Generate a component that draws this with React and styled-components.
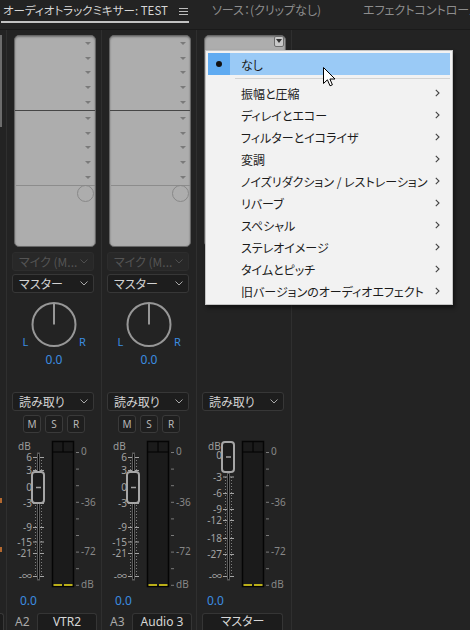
import React from 'react';
import styled, { createGlobalStyle } from 'styled-components';

const JP = `"Noto Sans CJK JP", "Noto Sans", sans-serif`;
const UI = `"Noto Sans", "Noto Sans CJK JP", sans-serif`;
const BLUE = '#3b8de0';

const GlobalStyle = createGlobalStyle`
  html, body { margin: 0; padding: 0; background: #232323; }
  body { font-family: ${UI}; }
  * { box-sizing: border-box; }
`;

const Frame = styled.div`
  position: relative;
  width: 470px;
  height: 630px;
  overflow: hidden;
  background: #232323;
  display: flex;
  flex-direction: column;
`;

/* ---------- tabs ---------- */
const TabBar = styled.div`
  height: 30px;
  flex: none;
  display: flex;
  align-items: flex-start;
  border-bottom: 1px solid #1a1a1a;
`;
const Tab = styled.div`
  height: 23px;
  flex: none;
  display: flex;
  align-items: center;
  margin-left: ${p => p.$ml}px;
  padding-left: ${p => p.$pl || 0}px;
  width: ${p => (p.$w ? `${p.$w}px` : 'auto')};
  font-family: ${JP};
  font-size: ${p => p.$fs || 12}px;
  font-feature-settings: "palt";
  white-space: nowrap;
  padding-bottom: 2px;
  color: ${p => (p.$active ? '#d6d6d6' : '#8d8d8d')};
  border-bottom: 2px solid ${p => (p.$active ? '#c2c2c2' : 'transparent')};
`;
const TabMenuIcon = styled.svg`
  margin-left: auto;
  margin-right: 1px;
  margin-top: 4px;
  flex: none;
`;

/* ---------- panel ---------- */
const Panel = styled.div`
  flex: 1;
  display: flex;
  min-height: 0;
`;
const Divider = styled.div`
  width: 1px;
  flex: none;
  background: #2f2f2f;
`;
const Edge = styled.div`
  width: 6px;
  flex: none;
  display: flex;
  flex-direction: column;
  align-items: flex-start;
`;
const EdgeFx = styled.div`
  margin-top: 5px;
  width: 2px;
  height: 92px;
  background: #6c6c6c;
`;
const EdgeMark = styled.div`
  width: 2px;
  height: 5px;
  margin-top: ${p => p.$mt}px;
  background: #b3682f;
`;
const EdgeName = styled.div`
  margin-top: auto;
  width: 4px;
  height: 17px;
  background: #1c1c1c;
  border: 1px solid #383838;
  border-left: none;
  border-bottom: none;
  border-radius: 0 3px 0 0;
`;
const Column = styled.div`
  width: 94px;
  flex: none;
  display: flex;
  flex-direction: column;
  padding-top: 5px;
  overflow: hidden;
  & > * { flex: none; }
`;

/* ---------- fx box ---------- */
const FxBox = styled.div`
  margin-left: 7px;
  width: 82px;
  height: 212px;
  background: #adadad;
  border: 1px solid #666;
  border-radius: 5px;
  box-shadow: inset 0 1px 2px rgba(0, 0, 0, 0.35);
  display: flex;
  flex-direction: column;
  overflow: hidden;
`;
const SlotGroup = styled.div`
  height: 74px;
  display: flex;
  flex-direction: column;
`;
const Slot = styled.div`
  flex: 1;
  display: flex;
  align-items: center;
  justify-content: flex-end;
  padding-right: 4px;
`;
const SlotArrow = styled.span`
  width: 0;
  height: 0;
  border-left: 3px solid transparent;
  border-right: 3px solid transparent;
  border-top: 3px solid #7a7a7a;
`;
const SlotButton = styled.span`
  width: 10px;
  height: 11px;
  margin-right: -3px;
  margin-top: -4px;
  background: #c9c9c9;
  border: 1px solid #6c6c6c;
  border-radius: 2px;
  display: flex;
  align-items: center;
  justify-content: center;
  &::after {
    content: '';
    border-left: 3px solid transparent;
    border-right: 3px solid transparent;
    border-top: 4px solid #333;
  }
`;
const FxRule = styled.div`
  height: 1px;
  background: ${p => (p.$light ? '#8c8c8c' : '#464646')};
  margin-left: ${p => (p.$light ? 1 : 0)}px;
`;
const SendRow = styled.div`
  display: flex;
  justify-content: flex-end;
  margin-top: -1px;
  padding-right: 1px;
`;
const SendDial = styled.div`
  width: 17px;
  height: 17px;
  border-radius: 50%;
  border: 1px solid #888;
`;

/* ---------- controls ---------- */
const SendSection = styled.div`
  height: 145px;
  display: flex;
  flex-direction: column;
  padding-top: 5px;
  gap: 3px;
`;
const Select = styled.div`
  margin-left: 5px;
  width: 82px;
  height: 19px;
  display: flex;
  align-items: center;
  justify-content: space-between;
  padding: 0 5px 0 6px;
  border-radius: 3px;
  font-family: ${JP};
  font-size: 12px;
  font-feature-settings: "palt";
  white-space: nowrap;
  background: ${p => (p.$disabled ? '#282828' : '#1d1d1d')};
  border: 1px solid ${p => (p.$disabled ? '#2d2d2d' : '#373737')};
  color: ${p => (p.$disabled ? '#545454' : '#d2d2d2')};
`;
const KnobSvg = styled.svg`
  display: block;
  margin-top: 2px;
  text {
    font-family: ${UI};
    font-size: 11px;
    fill: ${BLUE};
  }
`;
const Value = styled.div`
  height: ${p => p.$h}px;
  line-height: ${p => p.$h}px;
  font-family: ${UI};
  font-size: 12px;
  color: ${BLUE};
  text-align: ${p => (p.$center ? 'center' : 'left')};
  padding-left: ${p => p.$pl || 0}px;
`;
const MsrRow = styled.div`
  height: 18px;
  margin-top: 4px;
  display: flex;
  justify-content: center;
  gap: 4px;
`;
const MsrButton = styled.div`
  width: 18px;
  height: 18px;
  display: flex;
  align-items: center;
  justify-content: center;
  background: #1e1e1e;
  border: 1px solid #3a3a3a;
  border-radius: 3px;
  font-family: ${UI};
  font-size: 10px;
  color: #b8b8b8;
`;
const MeterSvg = styled.svg`
  display: block;
  text {
    font-family: ${UI};
    font-size: 10px;
  }
`;
const NameRow = styled.div`
  margin-top: 1px;
  height: 20px;
  display: flex;
  align-items: flex-start;
`;
const TrackId = styled.div`
  width: 22px;
  margin-left: 8px;
  height: 18px;
  line-height: 18px;
  font-family: ${UI};
  font-size: 12px;
  color: #a9a9a9;
`;
const NameBox = styled.div`
  margin-left: ${p => p.$ml}px;
  width: ${p => p.$w}px;
  height: 20px;
  line-height: 15px;
  text-align: center;
  background: #1c1c1c;
  border: 1px solid #353535;
  border-bottom: none;
  border-radius: 3px 3px 0 0;
  font-family: ${UI};
  font-size: 12px;
  font-feature-settings: "palt";
  color: #d6d6d6;
  white-space: nowrap;
`;

/* ---------- menu ---------- */
const Menu = styled.div`
  position: absolute;
  left: 205px;
  top: 50px;
  width: 248px;
  padding: 2px;
  background: #f2f2f2;
  border: 1px solid #c4c4c4;
  box-shadow: 2px 3px 4px rgba(0, 0, 0, 0.45);
  font-family: ${JP};
  font-size: 12px;
  font-feature-settings: "palt";
  color: #1b1b1b;
  z-index: 5;
`;
const MenuItem = styled.div`
  height: 22px;
  display: flex;
  align-items: center;
  padding-right: 10px;
  background: ${p => (p.$hl ? '#9acaf6' : 'transparent')};
`;
const MenuIcon = styled.div`
  width: 22px;
  height: 100%;
  flex: none;
  display: flex;
  align-items: center;
  justify-content: center;
  background: ${p => (p.$hl ? '#60abf1' : 'transparent')};
`;
const Bullet = styled.span`
  width: 6px;
  height: 6px;
  border-radius: 50%;
  background: #111;
`;
const MenuLabel = styled.span`
  flex: 1;
  margin-left: 11px;
  white-space: nowrap;
`;
const MenuSep = styled.div`
  height: 1px;
  margin: 3px 0 3px 27px;
  background: #d3d3d3;
`;
const Cursor = styled.svg`
  position: absolute;
  left: 323px;
  top: 67px;
  z-index: 6;
`;

const Chevron = ({ color = '#a8a8a8' }) => (
  <svg width="8" height="5" viewBox="0 0 8 5">
    <polyline points="0.5,0.5 4,4 7.5,0.5" fill="none" stroke={color} strokeWidth="1" />
  </svg>
);

const MenuArrow = () => (
  <svg width="5" height="8" viewBox="0 0 5 8">
    <polyline points="0.8,0.8 4,4 0.8,7.2" fill="none" stroke="#444" strokeWidth="1.1" />
  </svg>
);

function FxPanel({ master }) {
  const slots = [0, 1, 2, 3, 4];
  return (
    <FxBox>
      <SlotGroup>
        {slots.map(i => (
          <Slot key={i}>{master && i === 0 ? <SlotButton /> : <SlotArrow />}</Slot>
        ))}
      </SlotGroup>
      <FxRule />
      <SlotGroup>
        {slots.map(i => (
          <Slot key={i}>
            <SlotArrow />
          </Slot>
        ))}
      </SlotGroup>
      <FxRule $light />
      <SendRow>
        <SendDial />
      </SendRow>
    </FxBox>
  );
}

function Knob() {
  return (
    <KnobSvg width="94" height="52" viewBox="0 0 94 52">
      <circle cx="47" cy="26.5" r="21.5" fill="none" stroke="#979797" strokeWidth="2" />
      <line x1="47" y1="26.5" x2="47" y2="5" stroke="#979797" strokeWidth="2" />
      <text x="18.5" y="43" textAnchor="middle" dominantBaseline="central">L</text>
      <text x="75.5" y="43" textAnchor="middle" dominantBaseline="central">R</text>
    </KnobSvg>
  );
}

const TRACK_SCALE = {
  labels: [['6', 24], ['3', 37], ['0', 54], ['-3', 70], ['-9', 94], ['-15', 108.5], ['-21', 120], ['-\u221e', 143]],
  handle: [39, 70],
  track: [20, 147],
  dots: [24, 143],
};
const MASTER_SCALE = {
  labels: [['0', 22], ['-3', 43.5], ['-6', 60], ['-9', 76], ['-12', 87], ['-18', 105], ['-27', 121], ['-\u221e', 143]],
  handle: [9, 39],
  track: [40, 147],
  dots: [44, 143],
};

function Meter({ master }) {
  const s = master ? MASTER_SCALE : TRACK_SCALE;
  const ticks = Array.from({ length: 9 }, (_, i) => 19 + i * 16.6);
  const right = [['0', 18], ['-36', 68.5], ['-72', 118], ['dB', 151]];
  return (
    <MeterSvg width="94" height="157" viewBox="0 0 94 157">
      <text x="11" y="13" fill="#9c9c9c" dominantBaseline="central">dB</text>
      {s.labels.map(([t, y]) => (
        <text key={t} x="25" y={y} fill="#a4a4a4" textAnchor="end" dominantBaseline="central">{t}</text>
      ))}
      <line x1="28.5" y1={s.dots[0]} x2="28.5" y2={s.dots[1]} stroke="#808080" strokeDasharray="1 2" />
      <line x1="34.5" y1={s.dots[0]} x2="34.5" y2={s.dots[1]} stroke="#808080" strokeDasharray="1 2" />
      <rect x="30.5" y={s.track[0]} width="2" height={s.track[1] - s.track[0]} fill="#050505" stroke="#5a5a5a" strokeWidth="1" />
      {s.labels.map(([t, y]) => (
        <g key={t} stroke="#a4a4a4" strokeWidth="1">
          <line x1="26" y1={y + 0.5} x2="30" y2={y + 0.5} />
          <line x1="33" y1={y + 0.5} x2="37" y2={y + 0.5} />
        </g>
      ))}
      <rect x="25" y={s.handle[0]} width="12" height={s.handle[1] - s.handle[0]} rx="3" fill="#1c1c1c" stroke="#a6a6a6" strokeWidth="2" />
      <line x1="29" y1={(s.handle[0] + s.handle[1]) / 2} x2="34" y2={(s.handle[0] + s.handle[1]) / 2} stroke="#a0a0a0" strokeWidth="1.5" />
      <rect x="45.5" y="8.5" width="21" height="145" fill="#1b1b1b" stroke="#050505" strokeWidth="1.5" />
      <line x1="45.5" y1="19" x2="66.5" y2="19" stroke="#050505" strokeWidth="1.2" />
      <line x1="56" y1="8.5" x2="56" y2="19" stroke="#050505" strokeWidth="1.2" />
      <line x1="46.5" y1="152" x2="55" y2="152" stroke="#f2e21a" strokeWidth="1.5" />
      <line x1="57" y1="152" x2="65.5" y2="152" stroke="#f2e21a" strokeWidth="1.5" />
      {ticks.map((y, i) => (
        <line key={i} x1="69" y1={y + 0.5} x2="72" y2={y + 0.5} stroke="#7a7a7a" strokeWidth="1" />
      ))}
      {right.map(([t, y]) => (
        <text key={t} x="74" y={y} fill="#878787" dominantBaseline="central">{t}</text>
      ))}
    </MeterSvg>
  );
}

function Track({ id, name }) {
  return (
    <Column>
      <FxPanel />
      <SendSection>
        <Select $disabled>
          マイク (M...
          <Chevron color="#4e4e4e" />
        </Select>
        <Select>
          マスター
          <Chevron />
        </Select>
        <Knob />
        <Value $h={14} $center>0.0</Value>
      </SendSection>
      <Select>
        読み取り
        <Chevron />
      </Select>
      <MsrRow>
        <MsrButton>M</MsrButton>
        <MsrButton>S</MsrButton>
        <MsrButton>R</MsrButton>
      </MsrRow>
      <Meter />
      <Value $h={22} $pl={13}>0.0</Value>
      <NameRow>
        <TrackId>{id}</TrackId>
        <NameBox $ml={0} $w={60}>{name}</NameBox>
      </NameRow>
    </Column>
  );
}

function MasterTrack() {
  return (
    <Column>
      <FxPanel master />
      <SendSection />
      <Select>
        読み取り
        <Chevron />
      </Select>
      <MsrRow />
      <Meter master />
      <Value $h={22} $pl={10}>0.0</Value>
      <NameRow>
        <NameBox $ml={5} $w={81}>マスター</NameBox>
      </NameRow>
    </Column>
  );
}

const MENU = [
  '振幅と圧縮',
  'ディレイとエコー',
  'フィルターとイコライザ',
  '変調',
  'ノイズリダクション / レストレーション',
  'リバーブ',
  'スペシャル',
  'ステレオイメージ',
  'タイムとピッチ',
  '旧バージョンのオーディオエフェクト',
];

export default function App() {
  return (
    <>
      <GlobalStyle />
      <Frame>
        <TabBar>
          <Tab $active $ml={1} $pl={2} $w={188} $fs={11.5}>
            オーディオトラックミキサー: TEST
            <TabMenuIcon width="9" height="8" viewBox="0 0 9 8">
              <g stroke="#bdbdbd" strokeWidth="1">
                <line x1="0" y1="0.5" x2="9" y2="0.5" />
                <line x1="0" y1="3.5" x2="9" y2="3.5" />
                <line x1="0" y1="6.5" x2="9" y2="6.5" />
              </g>
            </TabMenuIcon>
          </Tab>
          <Tab $ml={23}>ソース：(クリップなし)</Tab>
          <Tab $ml={42}>エフェクトコントロール</Tab>
        </TabBar>
        <Panel>
          <Edge>
            <EdgeFx />
            <EdgeMark $mt={371} />
            <EdgeMark $mt={44} />
            <EdgeName />
          </Edge>
          <Divider />
          <Track id="A2" name="VTR2" />
          <Divider />
          <Track id="A3" name="Audio 3" />
          <Divider />
          <MasterTrack />
          <Divider />
        </Panel>
        <Menu>
          <MenuItem $hl>
            <MenuIcon $hl>
              <Bullet />
            </MenuIcon>
            <MenuLabel>なし</MenuLabel>
          </MenuItem>
          <MenuSep />
          {MENU.map(label => (
            <MenuItem key={label}>
              <MenuIcon />
              <MenuLabel>{label}</MenuLabel>
              <MenuArrow />
            </MenuItem>
          ))}
        </Menu>
        <Cursor width="13" height="20" viewBox="0 0 13 20">
          <path d="M0.5,0.5 L0.5,16.5 L4.4,12.8 L7,18.8 L9.4,17.8 L6.9,12 L12,12 Z" fill="#fff" stroke="#000" strokeWidth="1" strokeLinejoin="miter" />
        </Cursor>
      </Frame>
    </>
  );
}
